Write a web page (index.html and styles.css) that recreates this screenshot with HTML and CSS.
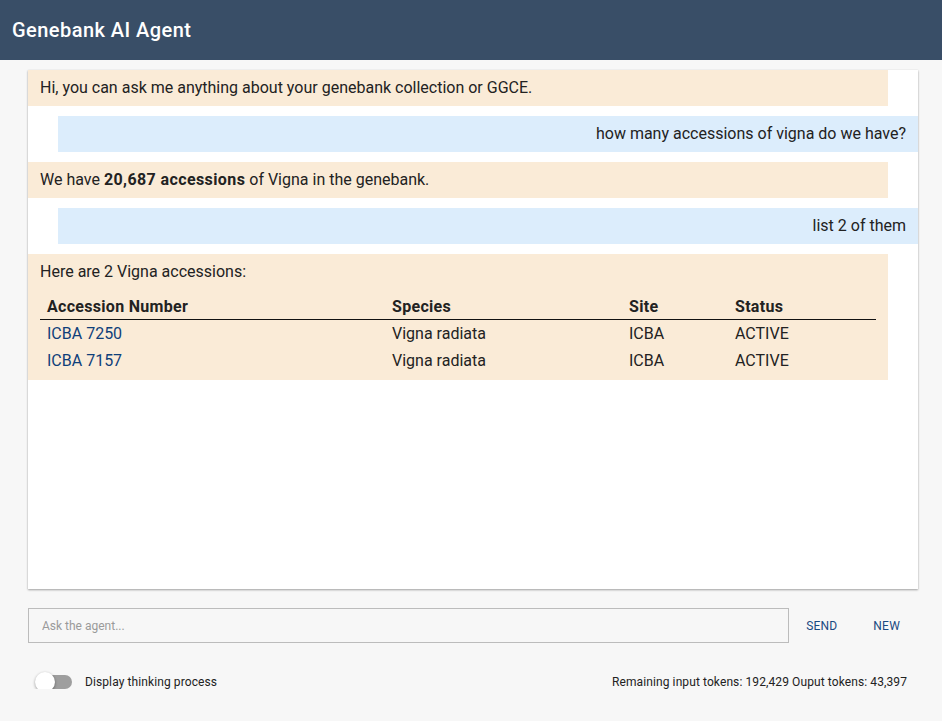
FILE: index.html
```html
<!DOCTYPE html>
<html lang="en">
<head>
    <meta charset="UTF-8">
    <meta name="viewport" content="width=device-width, initial-scale=1.0">
    <title>Genebank AI Agent</title>
    <link rel="stylesheet" href="styles.css">
</head>
<body>
    <header class="app-bar">
        <h1>Genebank AI Agent</h1>
    </header>

    <main class="page">
        <section class="chat-panel">
            <div class="msg msg-agent">Hi, you can ask me anything about your genebank collection or GGCE.</div>
            <div class="msg msg-user">how many accessions of vigna do we have?</div>
            <div class="msg msg-agent">We have <b>20,687 accessions</b> of Vigna in the genebank.</div>
            <div class="msg msg-user">list 2 of them</div>
            <div class="msg msg-agent msg-table">
                <p>Here are 2 Vigna accessions:</p>
                <table class="result-table">
                    <thead>
                        <tr>
                            <th class="col-acc">Accession Number</th>
                            <th class="col-species">Species</th>
                            <th class="col-site">Site</th>
                            <th>Status</th>
                        </tr>
                    </thead>
                    <tbody>
                        <tr>
                            <td><a href="#">ICBA 7250</a></td>
                            <td>Vigna radiata</td>
                            <td>ICBA</td>
                            <td>ACTIVE</td>
                        </tr>
                        <tr>
                            <td><a href="#">ICBA 7157</a></td>
                            <td>Vigna radiata</td>
                            <td>ICBA</td>
                            <td>ACTIVE</td>
                        </tr>
                    </tbody>
                </table>
            </div>
        </section>

        <div class="composer">
            <input class="ask-input" type="text" placeholder="Ask the agent...">
            <button class="text-btn">Send</button>
            <button class="text-btn">New</button>
        </div>

        <div class="footer-row">
            <label class="switch">
                <span class="switch-track"><span class="switch-knob"></span></span>
                <span class="switch-label">Display thinking process</span>
            </label>
            <div class="tokens">Remaining input tokens: 192,429 Ouput tokens: 43,397</div>
        </div>
    </main>
</body>
</html>
```

FILE: styles.css
```css
body {
    margin: 0;
    padding: 0;
    background: #f7f7f7;
    font-family: 'Roboto', 'Liberation Sans', sans-serif;
    color: #222;
}

.app-bar {
    height: 60px;
    background: #394e67;
    display: flex;
    align-items: center;
    padding: 0 12px;
}

.app-bar h1 {
    margin: 0;
    color: #fff;
    font-size: 20px;
    font-weight: 500;
    letter-spacing: 0.45px;
}

.page {
    padding: 10px 24px 0 28px;
}

.chat-panel {
    height: 519px;
    background: #fff;
    box-shadow: 0 1px 2px rgba(0,0,0,0.35), 0 0 1px rgba(0,0,0,0.08);
    display: flex;
    flex-direction: column;
    gap: 10px;
}

.msg {
    padding: 8px 12px;
    font-size: 16px;
    line-height: 20px;
}

.msg-agent {
    background: #faebd7;
    margin-right: 30px;
}

.msg-user {
    background: #dcedfc;
    margin-left: 30px;
    text-align: right;
}

.msg b {
    font-weight: 700;
    letter-spacing: 0.4px;
}

.msg-table {
    padding-bottom: 6px;
}

.msg-table p {
    margin: 0 0 11px;
}

.result-table {
    width: 100%;
    border-collapse: collapse;
}

.result-table th {
    text-align: left;
    font-weight: 700;
    letter-spacing: 0.3px;
    padding: 4px 7px 2px;
    line-height: 20px;
    border-bottom: 1px solid #111;
}

.result-table td {
    padding: 4px 7px 3px;
    line-height: 20px;
}

.col-acc { width: 331px; }
.col-species { width: 223px; }
.col-site { width: 92px; }

.result-table a {
    color: #0f3f7a;
    text-decoration: none;
}

.composer {
    display: flex;
    align-items: center;
    margin-top: 19px;
    padding-right: 10px;
}

.ask-input {
    flex: 1;
    height: 35px;
    box-sizing: border-box;
    border: 1px solid #bcbcbc;
    background: #f7f7f7;
    padding: 0 13px;
    font-family: inherit;
    font-size: 12px;
    color: #333;
    margin-right: 9px;
}

.ask-input::placeholder {
    color: #9a9a9a;
}

.text-btn {
    background: none;
    border: none;
    font-family: inherit;
    font-size: 12px;
    text-transform: uppercase;
    color: #1a4a82;
    padding: 6px 8px;
    margin-right: 20px;
    letter-spacing: 0.2px;
    cursor: pointer;
}

.text-btn:last-child {
    margin-right: 0;
}

.footer-row {
    display: flex;
    align-items: center;
    justify-content: space-between;
    margin-top: 32px;
    padding: 0 11px 0 8px;
    font-size: 12px;
    letter-spacing: 0.1px;
}

.switch {
    display: flex;
    align-items: center;
}

.switch-track {
    position: relative;
    width: 36px;
    height: 14px;
    border-radius: 7px;
    background: #9e9e9e;
    margin-right: 13px;
}

.switch-knob {
    position: absolute;
    left: -1px;
    top: -3px;
    width: 20px;
    height: 20px;
    border-radius: 50%;
    background: #fff;
    box-shadow: 0 1px 3px rgba(0,0,0,0.4);
}

.switch-label {
    color: #222;
}

.tokens {
    color: #222;
}
```
